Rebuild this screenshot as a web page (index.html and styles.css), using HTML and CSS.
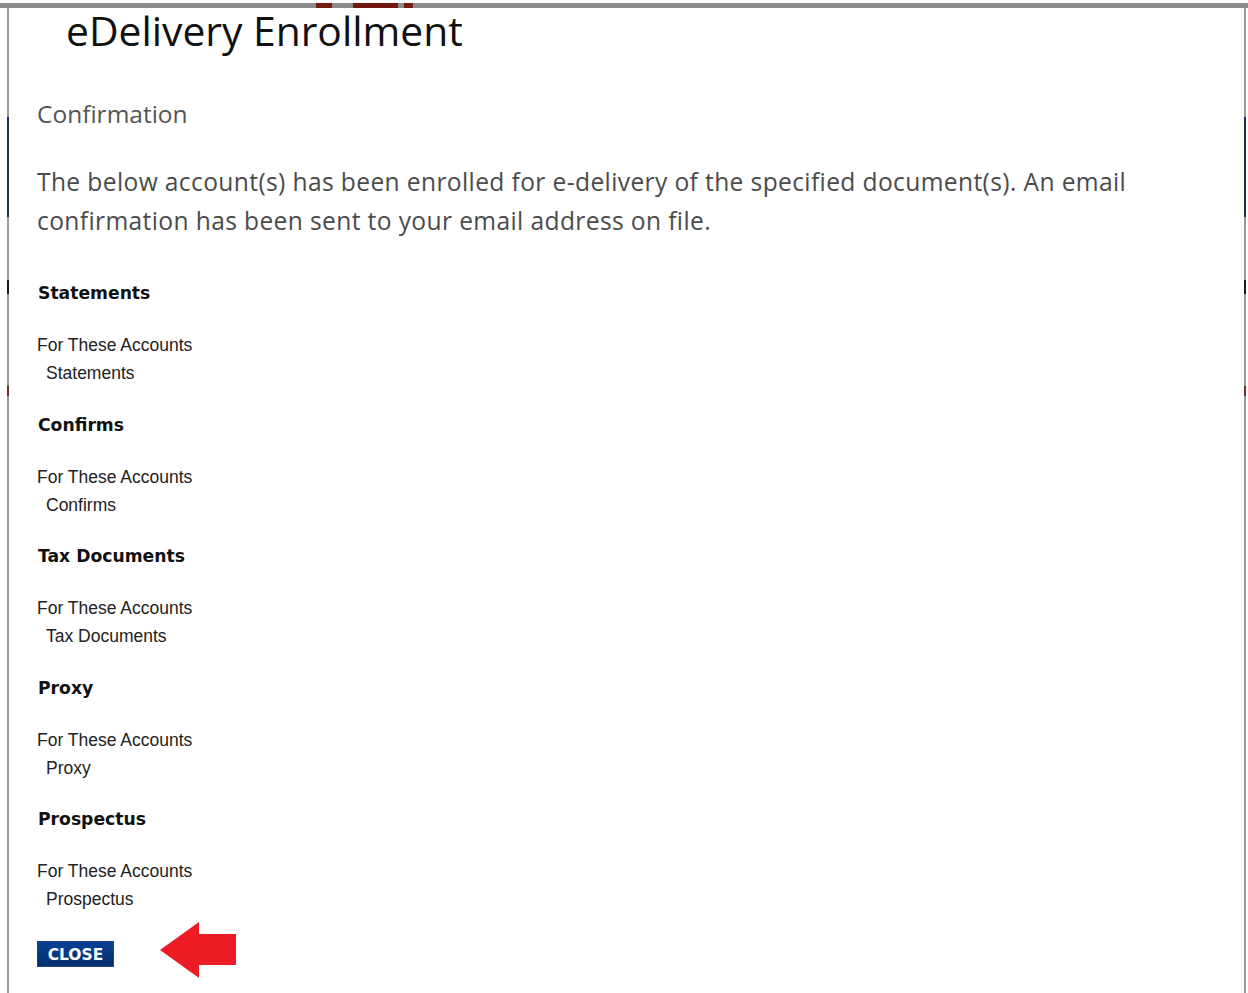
FILE: index.html
```html
<!DOCTYPE html>
<html lang="en">
<head>
<meta charset="utf-8">
<title>eDelivery Enrollment</title>
<link rel="stylesheet" href="styles.css">
</head>
<body>
<div class="backdrop-edge"></div>
<div class="dialog">
  <h1 class="dialog-title">eDelivery Enrollment</h1>
  <h2 class="step-name">Confirmation</h2>
  <p class="intro">The below account(s) has been enrolled for e-delivery of the specified document(s). An email confirmation has been sent to your email address on file.</p>

  <section class="doc-group">
    <h3 class="doc-title">Statements</h3>
    <div class="doc-label">For These Accounts</div>
    <div class="doc-item">Statements</div>
  </section>
  <section class="doc-group">
    <h3 class="doc-title">Confirms</h3>
    <div class="doc-label">For These Accounts</div>
    <div class="doc-item">Confirms</div>
  </section>
  <section class="doc-group">
    <h3 class="doc-title">Tax Documents</h3>
    <div class="doc-label">For These Accounts</div>
    <div class="doc-item">Tax Documents</div>
  </section>
  <section class="doc-group">
    <h3 class="doc-title">Proxy</h3>
    <div class="doc-label">For These Accounts</div>
    <div class="doc-item">Proxy</div>
  </section>
  <section class="doc-group">
    <h3 class="doc-title">Prospectus</h3>
    <div class="doc-label">For These Accounts</div>
    <div class="doc-item">Prospectus</div>
  </section>

  <div class="actions">
    <button class="close-btn" type="button">CLOSE</button>
    <svg class="pointer" width="78" height="57" viewBox="0 0 78 57" aria-hidden="true">
      <polygon points="1,28 40,0 40,12 77,12 77,43 40,43 40,56" fill="#ec1c24"/>
    </svg>
  </div>
</div>
</body>
</html>
```

FILE: styles.css
```css
html, body {
  margin: 0;
  padding: 0;
  background: #ffffff;
}

body {
  height: 993px;
  overflow: hidden;
}

/* strip of the page behind the dialog */
.backdrop-edge {
  margin-top: 3px;
  height: 5px;
  background: linear-gradient(to right,
    #8b8b8b 0 316px,
    #7a1a14 316px 332px,
    #8b8b8b 332px 353px,
    #741712 353px 398px,
    #8b8b8b 398px 404px,
    #7a1a14 404px 413px,
    #8b8b8b 413px);
}

.dialog {
  box-sizing: border-box;
  margin-left: 7px;
  width: 1239px;
  height: 985px;
  padding: 0 0 0 28px;
  border-style: solid;
  border-width: 0 2px;
  border-image: linear-gradient(to bottom,
    #9a9a9a 0 110px,
    #1d2f5c 110px 210px,
    #9a9a9a 210px 272px,
    #1a1a1a 272px 286px,
    #9a9a9a 286px 378px,
    #7b2a2a 378px 388px,
    #9a9a9a 388px) 1;
  background: #ffffff;
}

.dialog-title {
  margin: 0 0 0 29px;
  font-family: "Open Sans", "Noto Sans", sans-serif;
  font-weight: 400;
  font-size: 40.8px;
  line-height: 44px;
  color: #111111;
}

.step-name {
  margin: 46px 0 0 0;
  font-family: "Open Sans", "Noto Sans", sans-serif;
  font-weight: 400;
  font-size: 24.5px;
  line-height: 32px;
  color: #555555;
}

.intro {
  margin: 32px 0 0 0;
  max-width: 1110px;
  font-family: "Open Sans", "Noto Sans", sans-serif;
  font-size: 24.6px;
  letter-spacing: 0.37px;
  line-height: 39px;
  color: #4b4b4b;
}

.intro + .doc-group {
  margin-top: 40px;
}

.doc-title {
  margin: 0 0 0 1px;
  font-family: "DejaVu Sans", sans-serif;
  font-weight: 700;
  font-size: 17.2px;
  line-height: 26px;
  color: #111111;
}

.doc-label {
  margin-top: 25px;
  font-family: "Liberation Sans", Arial, sans-serif;
  font-size: 17.5px;
  line-height: 28px;
  color: #222222;
}

.doc-item {
  margin-left: 9px;
  margin-bottom: 24.5px;
  font-family: "Liberation Sans", Arial, sans-serif;
  font-size: 17.5px;
  line-height: 28px;
  color: #222222;
}

.actions {
  display: flex;
  align-items: flex-start;
  gap: 45px;
  margin-top: -16px;
}

.close-btn {
  margin-top: 19px;
  width: 77px;
  height: 26px;
  padding: 3px 0 0 0;
  border: 1px solid #1c4591;
  background: linear-gradient(to bottom, #0c3f92, #00306f);
  color: #ffffff;
  font-family: "DejaVu Sans", sans-serif;
  font-weight: 700;
  font-size: 15.5px;
  line-height: 20px;
}

.pointer {
  display: block;
}
```
